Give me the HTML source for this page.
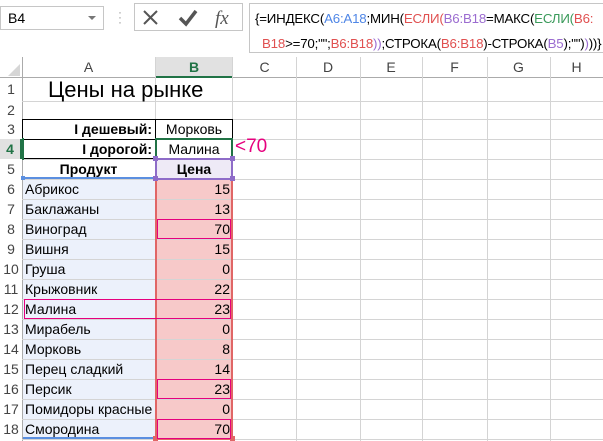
<!DOCTYPE html><html><head><meta charset="utf-8"><style>
*{box-sizing:border-box;margin:0;padding:0}
body{width:603px;height:441px;overflow:hidden;background:#fff;font-family:"Liberation Sans",sans-serif;position:relative;color:#000}
.a{position:absolute}
.t{position:absolute;font-size:14px;line-height:20px;white-space:nowrap}
.hl{position:absolute;height:1px;background:#d4d4d4}
.vl{position:absolute;width:1px;background:#d4d4d4}
.ch{position:absolute;top:57px;height:21px;font-size:14px;line-height:21px;text-align:center;color:#444}
.rn{position:absolute;left:0;width:22px;font-size:14px;text-align:center;color:#444}
</style></head><body>
<div class="a" style="left:0;top:6px;width:104px;height:24px;border:1px solid #c6c6c6"></div>
<div class="t" style="left:8px;top:8px;font-size:14px">B4</div>
<div class="a" style="left:88px;top:16px;width:0;height:0;border-left:4px solid transparent;border-right:4px solid transparent;border-top:4px solid #777"></div>
<div class="a" style="left:118px;top:10px;color:#999;font-size:12px;line-height:5px">·<br>·<br>·</div>
<div class="a" style="left:134px;top:3px;width:109px;height:28px;border:1px solid #c6c6c6"></div>
<svg class="a" style="left:134px;top:3px" width="109" height="28"><path d="M10 8 L23 21 M23 8 L10 21" stroke="#555" stroke-width="2"/><path d="M46 15 L52 21 L62 8" stroke="#555" stroke-width="3.5" fill="none"/><text x="81" y="21" font-family="Liberation Serif" font-style="italic" font-size="19" fill="#555">fx</text></svg>
<div class="a" style="left:249px;top:3px;width:356px;height:50px;border:1px solid #c6c6c6"></div>
<div class="t" style="left:255px;top:6px;font-size:13.3px;line-height:25px;letter-spacing:-0.2px">{=ИНДЕКС(<span style="color:#4f86e6">A6:A18</span>;МИН(<span style="color:#e05050">ЕСЛИ(</span><span style="color:#9b6cd0">B6:B18</span>=МАКС(<span style="color:#3a9a5a">ЕСЛИ(</span><span style="color:#e05050">B6:</span><br>&nbsp;&nbsp;<span style="color:#e05050">B18</span>&gt;=70;"";<span style="color:#e05050">B6:B18</span><span style="color:#9b6cd0">))</span>;СТРОКА(<span style="color:#e05050">B6:B18</span>)-СТРОКА(<span style="color:#9b6cd0">B5</span>);"")<span style="color:#9b6cd0">)</span>))}</div>
<div class="a" style="left:0;top:57px;width:603px;height:21px;background:#fff;border-bottom:1px solid #ababab"></div>
<div class="a" style="left:155px;top:57px;width:78px;height:21px;background:#e1e1e1;border-bottom:2px solid #217346"></div>
<svg class="a" style="left:6px;top:64px" width="14" height="12"><path d="M14 0 L14 12 L2 12 Z" fill="#d6d6d6"/></svg>
<div class="ch" style="left:22px;width:133px">A</div>
<div class="ch" style="left:155px;width:78px;color:#217346;font-weight:bold">B</div>
<div class="ch" style="left:233px;width:63px">C</div>
<div class="ch" style="left:296px;width:64px">D</div>
<div class="ch" style="left:360px;width:62px">E</div>
<div class="ch" style="left:422px;width:65px">F</div>
<div class="ch" style="left:487px;width:63px">G</div>
<div class="ch" style="left:550px;width:53px">H</div>
<div class="a" style="left:22px;top:179px;width:133px;height:260px;background:#ecf1fb"></div>
<div class="a" style="left:155px;top:179px;width:78px;height:260px;background:#f7c9c9"></div>
<div class="a" style="left:155px;top:159px;width:78px;height:20px;background:#eeeaf6"></div>
<div class="vl" style="left:22px;top:57px;height:384px;background:#ababab"></div>
<div class="vl" style="left:155px;top:57px;height:384px"></div>
<div class="vl" style="left:232px;top:57px;height:384px"></div>
<div class="vl" style="left:296px;top:57px;height:384px"></div>
<div class="vl" style="left:360px;top:57px;height:384px"></div>
<div class="vl" style="left:422px;top:57px;height:384px"></div>
<div class="vl" style="left:487px;top:57px;height:384px"></div>
<div class="vl" style="left:550px;top:57px;height:384px"></div>
<div id="g"></div>
<div class="a" style="left:22px;top:119px;width:211px;height:40px;border:1px solid #000"></div>
<div class="a" style="left:155px;top:119px;width:1px;height:40px;background:#000"></div>
<div class="a" style="left:22px;top:139px;width:211px;height:1px;background:#000"></div>
<div class="a" style="left:22px;top:138px;width:2px;height:22px;background:#217346"></div>
<div class="a" style="left:155px;top:138px;width:78px;height:22px;border:2px solid #217346"></div>
<div class="a" style="left:155px;top:158px;width:78px;height:22px;border:2px solid #8e6cc8"></div>
<div class="a" style="left:155px;top:178px;width:78px;height:262px;border:2px solid #e06666;border-top:none"></div>
<div class="a" style="left:23px;top:177px;width:130px;height:2px;background:#5b8fe0"></div>
<div class="a" style="left:23px;top:437px;width:130px;height:2px;background:#5b8fe0"></div>
<div class="a" style="left:153px;top:156px;width:5px;height:5px;background:#8e6cc8"></div>
<div class="a" style="left:230px;top:156px;width:5px;height:5px;background:#8e6cc8"></div>
<div class="a" style="left:153px;top:176px;width:5px;height:5px;background:#8e6cc8"></div>
<div class="a" style="left:230px;top:176px;width:5px;height:5px;background:#8e6cc8"></div>
<div class="a" style="left:21px;top:176px;width:4px;height:4px;background:#5b8fe0"></div>
<div class="a" style="left:153px;top:436px;width:5px;height:5px;background:#e06666"></div>
<div class="a" style="left:230px;top:436px;width:5px;height:5px;background:#e06666"></div>
<div class="a" style="left:157px;top:219px;width:74px;height:20px;border:1px solid #e6007e"></div>
<div class="a" style="left:24px;top:299px;width:207px;height:20px;border:1px solid #e6007e"></div>
<div class="a" style="left:157px;top:379px;width:74px;height:20px;border:1px solid #e6007e"></div>
<div class="a" style="left:157px;top:419px;width:74px;height:20px;border:1px solid #e6007e"></div>
<div class="t" style="left:48px;top:78px;font-size:22px;line-height:23px">Цены на рынке</div>
<div class="t" style="left:22px;top:119px;width:130px;text-align:right;font-weight:bold">I дешевый:</div>
<div class="t" style="left:155px;top:119px;width:78px;text-align:center">Морковь</div>
<div class="t" style="left:22px;top:139px;width:130px;text-align:right;font-weight:bold">I дорогой:</div>
<div class="t" style="left:155px;top:139px;width:78px;text-align:center">Малина</div>
<div class="t" style="left:235px;top:137px;font-size:19px;color:#e6007e">&lt;70</div>
<div class="t" style="left:22px;top:159px;width:133px;text-align:center;font-weight:bold">Продукт</div>
<div class="t" style="left:155px;top:159px;width:78px;text-align:center;font-weight:bold">Цена</div>
<div class="rn" style="top:78px;line-height:23px">1</div>
<div class="rn" style="top:101px;line-height:18px">2</div>
<script>
var names=["Абрикос","Баклажаны","Виноград","Вишня","Груша","Крыжовник","Малина","Мирабель","Морковь","Перец сладкий","Персик","Помидоры красные","Смородина"];
var vals=[15,13,70,15,0,22,23,0,8,14,23,0,70];
var h="";
h+='<div class="hl" style="left:22px;top:101px;width:581px"></div><div class="hl" style="left:22px;top:119px;width:581px"></div>';
for(var r=3;r<=18;r++){var y=119+(r-3)*20;
h+='<div class="hl" style="left:22px;top:'+(y+20)+'px;width:581px"></div>';
h+='<div class="rn" style="top:'+y+'px;line-height:20px;'+(r==4?'color:#217346;font-weight:bold;background:#e1e1e1;border-right:2px solid #217346':'')+'">'+r+'</div>';
if(r>=6){var i=r-6;h+='<div class="t" style="left:25px;top:'+y+'px">'+names[i]+'</div><div class="t" style="left:155px;top:'+y+'px;width:75px;text-align:right">'+vals[i]+'</div>';}}
document.getElementById("g").innerHTML=h;
</script>
</body></html>
